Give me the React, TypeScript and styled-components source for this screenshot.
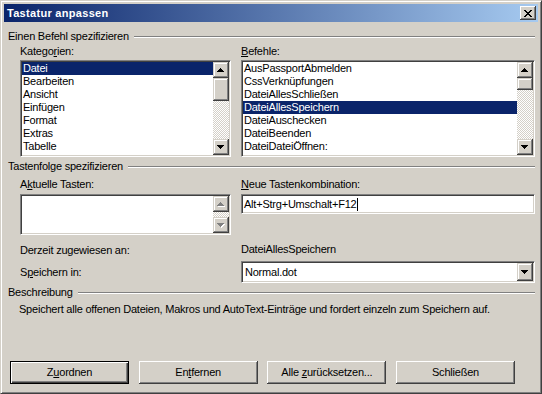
import React from 'react';
import styled, { createGlobalStyle, css } from 'styled-components';

const Global = createGlobalStyle`
  html, body { margin: 0; padding: 0; background: #d4d0c8; }
  #root { width: 542px; height: 394px; }
`;

const raised = css`
  background: #d4d0c8;
  box-shadow: inset -1px -1px #404040, inset 1px 1px #d4d0c8, inset -2px -2px #808080, inset 2px 2px #fff;
`;

const sunken = css`
  box-sizing: border-box;
  border: 1px solid;
  border-color: #808080 #fff #fff #808080;
  box-shadow: inset 1px 1px #404040, inset -1px -1px #d4d0c8;
  padding: 1px;
  background: #fff;
`;

const Window = styled.div`
  box-sizing: border-box;
  width: 542px;
  height: 394px;
  background: #d4d0c8;
  border: 1px solid;
  border-color: #d4d0c8 #404040 #404040 #d4d0c8;
  box-shadow: inset 1px 1px #fff, inset -1px -1px #808080;
  padding: 3px;
  display: flex;
  flex-direction: column;
  font-family: Tahoma, "Liberation Sans", Arial, sans-serif;
  font-size: 11px;
  line-height: 13px;
  letter-spacing: -0.22px;
  color: #000;
`;

const TitleBar = styled.div`
  height: 18px;
  flex: none;
  display: flex;
  align-items: center;
  justify-content: space-between;
  padding: 0 2px;
  background: linear-gradient(to right, #0a246a, #a6caf0);
`;

const Title = styled.span`
  color: #fff;
  font-weight: bold;
  font-size: 11px;
  line-height: 13px;
  letter-spacing: 0.3px;
  padding-left: 1px;
`;

const CloseButton = styled.div`
  width: 16px;
  height: 14px;
  box-sizing: border-box;
  display: flex;
  align-items: center;
  justify-content: center;
  padding-right: 1px;
  background: #d4d0c8;
  box-shadow: inset -1px -1px #404040, inset 1px 1px #fff, inset -2px -2px #808080;
`;

const Body = styled.div`
  flex: 1;
  display: flex;
  flex-direction: column;
  padding: 8px 3px 6px 4px;
`;

const GroupHeader = styled.div<{ $mt?: number }>`
  display: flex;
  align-items: center;
  height: 13px;
  margin-top: ${p => p.$mt ?? 0}px;
  white-space: nowrap;
  &::after {
    content: '';
    flex: 1;
    height: 0;
    border-top: 1px solid #808080;
    border-bottom: 1px solid #fff;
    margin-left: 5px;
  }
`;

const Columns = styled.div`
  display: grid;
  grid-template-columns: 211px 294px;
  column-gap: 10px;
  padding-left: 12px;
`;

const FieldLabel = styled.div<{ $mt?: number }>`
  height: 13px;
  margin-top: ${p => p.$mt ?? 0}px;
  white-space: nowrap;
`;

const ListFrame = styled.div<{ $h: number; $mt?: number }>`
  ${sunken};
  height: ${p => p.$h}px;
  margin-top: ${p => p.$mt ?? 0}px;
  display: flex;
`;

const Items = styled.div`
  flex: 1;
  overflow: hidden;
`;

const Item = styled.div<{ $sel?: boolean }>`
  height: 13px;
  padding-left: 1px;
  white-space: nowrap;
  background: ${p => (p.$sel ? '#0a246a' : 'transparent')};
  color: ${p => (p.$sel ? '#fff' : '#000')};
`;

const ScrollBar = styled.div`
  width: 16px;
  flex: none;
  display: flex;
  flex-direction: column;
`;

const ScrollButton = styled.div<{ $h?: number }>`
  box-sizing: border-box;
  width: 16px;
  height: ${p => p.$h ?? 16}px;
  flex: none;
  display: flex;
  align-items: center;
  justify-content: center;
  ${raised};
`;

const Track = styled.div`
  flex: 1;
  background-color: #fff;
  background-image: conic-gradient(#d4d0c8 25%, transparent 0 50%, #d4d0c8 0 75%, transparent 0);
  background-size: 2px 2px;
`;

const TextBox = styled.div`
  ${sunken};
  height: 20px;
  margin-top: 3px;
  padding-left: 2px;
  display: flex;
  align-items: center;
  white-space: nowrap;
`;

const Caret = styled.span`
  display: inline-block;
  width: 1px;
  height: 13px;
  background: #000;
  margin-left: 1px;
`;

const Row = styled.div<{ $mt: number }>`
  grid-column: 1 / -1;
  display: grid;
  grid-template-columns: 211px 294px;
  column-gap: 10px;
  align-items: center;
  margin-top: ${p => p.$mt}px;
`;

const Plain = styled.div<{ $dy?: number }>`
  white-space: nowrap;
  height: 13px;
  position: relative;
  top: ${p => p.$dy ?? 0}px;
`;

const Combo = styled.div`
  ${sunken};
  height: 22px;
  display: flex;
  align-items: stretch;
`;

const ComboText = styled.div`
  flex: 1;
  padding-left: 2px;
  display: flex;
  align-items: center;
`;

const Description = styled.div`
  margin-top: 4px;
  padding-left: 11px;
  white-space: nowrap;
`;

const ButtonRow = styled.div`
  margin-top: auto;
  margin-left: 2px;
  width: 505px;
  display: flex;
  justify-content: space-between;
`;

const Button = styled.div<{ $default?: boolean }>`
  box-sizing: border-box;
  width: 119px;
  height: 23px;
  display: flex;
  align-items: center;
  justify-content: center;
  background: #d4d0c8;
  white-space: nowrap;
  box-shadow: ${p =>
    p.$default
      ? 'inset 0 0 0 1px #000, inset 2px 2px #fff, inset -2px -2px #404040, inset -3px -3px #808080'
      : 'inset -1px -1px #404040, inset 1px 1px #fff, inset -2px -2px #808080'};
`;

const Caption = styled.span`
  white-space: pre;
`;

type Dir = 'up' | 'down';

function Arrow({ dir, disabled }: { dir: Dir; disabled?: boolean }) {
  const rows = [0, 1, 2, 3].map(i => ({ x: 3 - i, w: 2 * i + 1, y: dir === 'up' ? i : 3 - i }));
  return (
    <svg width={8} height={5} viewBox="0 0 8 5" shapeRendering="crispEdges">
      {disabled &&
        rows.map((r, i) => <rect key={'s' + i} x={r.x + 1} y={r.y + 1} width={r.w} height={1} fill="#fff" />)}
      {rows.map((r, i) => (
        <rect key={i} x={r.x} y={r.y} width={r.w} height={1} fill={disabled ? '#808080' : '#000'} />
      ))}
    </svg>
  );
}

function CloseGlyph() {
  const pattern = ['XX....XX', '.XX..XX.', '..XXXX..', '...XX...', '..XXXX..', '.XX..XX.', 'XX....XX'];
  const rects: React.ReactNode[] = [];
  pattern.forEach((row, y) =>
    row.split('').forEach((c, x) => {
      if (c === 'X') rects.push(<rect key={`${x}-${y}`} x={x} y={y} width={1} height={1} fill="#000" />);
    })
  );
  return (
    <svg width={8} height={7} viewBox="0 0 8 7" shapeRendering="crispEdges">
      {rects}
    </svg>
  );
}

function VScroll({ thumb, disabled }: { thumb?: number; disabled?: boolean }) {
  return (
    <ScrollBar>
      <ScrollButton>
        <Arrow dir="up" disabled={disabled} />
      </ScrollButton>
      {thumb ? <ScrollButton $h={thumb} /> : null}
      <Track />
      <ScrollButton>
        <Arrow dir="down" disabled={disabled} />
      </ScrollButton>
    </ScrollBar>
  );
}

function ListBox({ items, selected, thumb }: { items: string[]; selected: number; thumb: number }) {
  return (
    <ListFrame $h={97} $mt={2}>
      <Items>
        {items.map((t, i) => (
          <Item key={t} $sel={i === selected}>
            {t}
          </Item>
        ))}
      </Items>
      <VScroll thumb={thumb} />
    </ListFrame>
  );
}

const categories = ['Datei', 'Bearbeiten', 'Ansicht', 'Einfügen', 'Format', 'Extras', 'Tabelle'];
const commands = [
  'AusPassportAbmelden',
  'CssVerknüpfungen',
  'DateiAllesSchließen',
  'DateiAllesSpeichern',
  'DateiAuschecken',
  'DateiBeenden',
  'DateiDateiÖffnen:',
];

export default function App() {
  return (
    <>
      <Global />
      <Window>
        <TitleBar>
          <Title>Tastatur anpassen</Title>
          <CloseButton>
            <CloseGlyph />
          </CloseButton>
        </TitleBar>
        <Body>
          <GroupHeader>Einen Befehl spezifizieren</GroupHeader>
          <Columns>
            <div>
              <FieldLabel $mt={2}>
                Katego<u>r</u>ien:
              </FieldLabel>
              <ListBox items={categories} selected={0} thumb={23} />
            </div>
            <div>
              <FieldLabel $mt={2}>
                <u>B</u>efehle:
              </FieldLabel>
              <ListBox items={commands} selected={3} thumb={12} />
            </div>
          </Columns>

          <GroupHeader $mt={3}>Tastenfolge spezifizieren</GroupHeader>
          <Columns>
            <div>
              <FieldLabel $mt={5}>
                A<u>k</u>tuelle Tasten:
              </FieldLabel>
              <ListFrame $h={41} $mt={3}>
                <Items />
                <VScroll disabled />
              </ListFrame>
            </div>
            <div>
              <FieldLabel $mt={5}>
                <u>N</u>eue Tastenkombination:
              </FieldLabel>
              <TextBox>
                <span>Alt+Strg+Umschalt+F12</span>
                <Caret />
              </TextBox>
            </div>
            <Row $mt={9}>
              <Plain>Derzeit zugewiesen an:</Plain>
              <Plain $dy={-1}>DateiAllesSpeichern</Plain>
            </Row>
            <Row $mt={4}>
              <Plain>
                S<u>p</u>eichern in:
              </Plain>
              <Combo>
                <ComboText>Normal.dot</ComboText>
                <ScrollButton $h={18}>
                  <Arrow dir="down" />
                </ScrollButton>
              </Combo>
            </Row>
          </Columns>

          <GroupHeader $mt={3}>Beschreibung</GroupHeader>
          <Description>
            Speichert alle offenen Dateien, Makros und AutoText-Einträge und fordert einzeln zum Speichern auf.
          </Description>

          <ButtonRow>
            <Button $default>
              <Caption>
                Z<u>u</u>ordnen
              </Caption>
            </Button>
            <Button>
              <Caption>
                En<u>t</u>fernen
              </Caption>
            </Button>
            <Button>
              <Caption>
                {'Alle '}
                <u>z</u>
                {'urücksetzen...'}
              </Caption>
            </Button>
            <Button>
              <Caption>Schließen</Caption>
            </Button>
          </ButtonRow>
        </Body>
      </Window>
    </>
  );
}
